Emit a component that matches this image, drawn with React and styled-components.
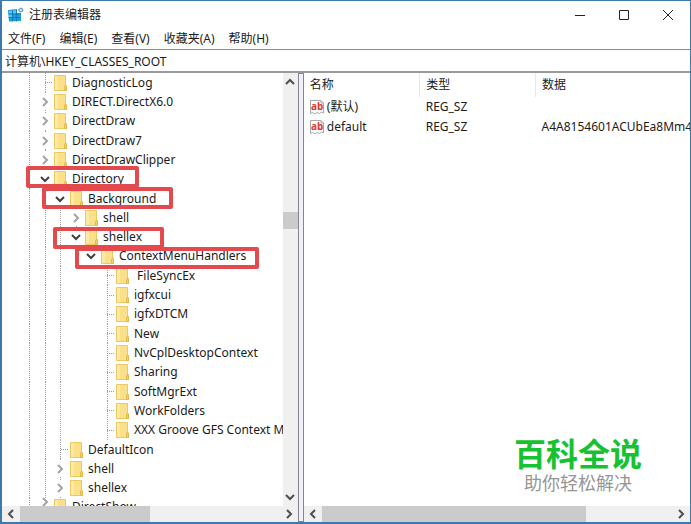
import React from 'react';
import styled, { createGlobalStyle } from 'styled-components';

const GlobalStyle = createGlobalStyle`
  * {
    box-sizing: border-box;
  }

  body {
    margin: 0;
    background: #fff;
    color: #1b1b1b;
    font: 12px/18px 'Noto Sans', 'Noto Sans CJK SC', sans-serif;
  }

  button, input {
    margin: 0;
    padding: 0;
    border: 0;
    background: none;
    color: inherit;
    font: inherit;
  }
`;

const Window = styled.div`
  display: flex;
  flex-direction: column;
  height: 100vh;
  border: 2px solid #3d79ad;
  border-width: 1px 1px 2px 2px;
  overflow: hidden;
`;

const TitleBar = styled.header`
  display: flex;
  flex: none;
  align-items: center;
  height: 28px;
  padding-left: 6px;
`;

const Title = styled.h1`
  flex: 1;
  margin: 0 0 0 5px;
  font-size: 12px;
  font-weight: 400;
`;

const WindowButton = styled.button`
  display: flex;
  align-items: center;
  justify-content: center;
  width: 44px;
  height: 28px;
`;

const MenuBar = styled.nav`
  display: flex;
  flex: none;
  gap: 14px;
  align-items: center;
  height: 20px;
  padding-left: 6px;
`;

const AddressBar = styled.input`
  flex: none;
  width: 100%;
  height: 22px;
  padding: 0 3px;
  border-top: 1px solid #8c8c8c;
  outline: 0;
`;

const Panes = styled.main`
  display: flex;
  flex: 1;
  min-height: 0;
  border-top: 2px solid #9a9a9a;
`;

const Pane = styled.section`
  position: relative;
  display: flex;
  flex: ${props => props.$flex};
  flex-direction: column;
  min-width: 0;
`;

const Splitter = styled.div`
  width: 6px;
  border: 1px solid #85858f;
  background: #f0f0f8;
`;

const PaneBody = styled.div`
  display: flex;
  flex: 1;
  min-height: 0;
`;

const Tree = styled.ul`
  display: flex;
  flex: 1;
  flex-direction: column;
  min-width: 0;
  margin: 0;
  padding: 0 0 0 19px;
  overflow: hidden;
  list-style: none;
`;

const TreeRow = styled.li`
  position: relative;
  display: flex;
  flex: ${props => (props.$cut ? '0 0 8px' : '1 1 0')};
  align-items: ${props => (props.$cut ? 'flex-start' : 'center')};
  min-height: 0;
  overflow: ${props => (props.$cut ? 'hidden' : 'visible')};
  white-space: nowrap;
`;

const dots = angle =>
  `repeating-linear-gradient(${angle}, #9c9c9c 0 1px, transparent 1px 2px)`;

const Guide = styled.span`
  display: flex;
  flex: none;
  align-items: center;
  align-self: stretch;
  justify-content: center;
  width: 16px;
  background: ${props => (props.$line ? dots('180deg') : 'none')} 8px 0 / 1px 100% no-repeat;

  &:nth-child(even) {
    width: 15px;
  }
`;

const Branch = styled.span`
  width: 7px;
  height: 1px;
  margin-left: 8px;
  background: ${dots('90deg')};
`;

const Expander = styled.button`
  display: flex;
  align-items: center;
  justify-content: center;
  width: 13px;
  height: 15px;
  background: #fff;
`;

const TreeLabel = styled.span`
  display: flex;
  align-items: center;
  gap: 5px;
  height: 19px;
  padding-left: 2px;
  white-space: pre;
`;

const Highlight = styled.span`
  position: absolute;
  top: ${props => props.$top}px;
  left: ${props => props.$left}px;
  z-index: 1;
  width: ${props => props.$width}px;
  height: 22px;
  border: 4px solid #e3494d;
  border-radius: 2px;
  pointer-events: none;
`;

const ScrollBar = styled.div`
  display: flex;
  flex: none;
  flex-direction: ${props => (props.$vertical ? 'column' : 'row')};
  width: ${props => (props.$vertical ? '15px' : 'auto')};
  height: ${props => (props.$vertical ? 'auto' : '16px')};
  background: #f0f0f0;
`;

const ScrollButton = styled.button`
  display: flex;
  flex: 0 0 18px;
  align-items: center;
  justify-content: center;
`;

const Track = styled.div`
  display: flex;
  flex: 1;
  flex-direction: inherit;
`;

const TrackSpace = styled.div`
  flex: ${props => props.$size} 1 0;
`;

const Thumb = styled.div`
  flex: ${props => props.$size} 1 0;
  background: #cbcbcb;
`;

const ValueArea = styled.div`
  flex: 1;
  min-height: 0;
  overflow: hidden;
`;

const Values = styled.table`
  width: 100%;
  border-collapse: collapse;
  table-layout: fixed;
`;

const HeadCell = styled.th`
  width: ${props => props.$width || 'auto'};
  height: 24px;
  padding: 0 0 0 6px;
  border-right: 1px solid #e8e8e8;
  font-weight: 400;
  text-align: left;

  &:last-child {
    border-right: 0;
  }
`;

const Cell = styled.td`
  height: 20px;
  padding: 0 0 0 6px;
  overflow: hidden;
  white-space: nowrap;
`;

const ValueName = styled.span`
  display: flex;
  align-items: center;
  gap: 2px;
  margin-left: -1px;
`;

const Watermark = styled.div`
  position: absolute;
  right: 48px;
  bottom: 28px;
  display: flex;
  flex-direction: column;
  align-items: center;
  font-family: 'Noto Sans CJK SC', sans-serif;
`;

const WatermarkName = styled.strong`
  color: #17c232;
  font-size: 32px;
  font-weight: 700;
  line-height: 36px;
`;

const WatermarkSlogan = styled.span`
  color: #969696;
  font-size: 18px;
  line-height: 24px;
`;

const chevrons = {
  up: 'M1 7 L5 3 L9 7',
  down: 'M1 3 L5 7 L9 3',
  left: 'M7 1 L3 5 L7 9',
  right: 'M3 1 L7 5 L3 9',
};

const Chevron = ({ dir, color = '#4f4f4f', width = 2 }) => (
  <svg width="10" height="10" viewBox="0 0 10 10" aria-hidden="true">
    <path d={chevrons[dir]} fill="none" stroke={color} strokeWidth={width} />
  </svg>
);

const FolderIcon = () => (
  <svg width="13" height="16" viewBox="0 0 13 16" aria-hidden="true">
    <path d="M0.5 0.5H11.5V10L12.5 11V15.5H0.5Z" fill="#fbe08a" stroke="#ecc963" />
    <path d="M1 1H4V15H1Z" fill="#fde9a6" />
    <path d="M10.5 15.5V12L11.5 10L12.5 11.5V15.5Z" fill="#f6d164" stroke="#e3b84b" />
  </svg>
);

const RegistryIcon = () => (
  <svg width="16" height="16" viewBox="0 0 16 16" aria-hidden="true">
    <path d="M0 3L9 2V6H13V14L1 14.5Z" fill="#1b9fdc" />
    <path d="M1 4L4 3.6V6.5H1ZM5 3.5L8 3.2V6.5H5ZM1 7.5H4V10H1Z" fill="#5cc9f2" />
    <path d="M0.5 7H12.5M0.5 10.5H12.5M4.5 3V14.5M8.5 3V14.5" stroke="#0f78b6" strokeWidth="0.8" />
    <path d="M12.5 0.5L15 1.5L15.5 4L13.5 5.5L11 5L10 2.5Z" fill="#69a9c9" />
    <circle cx="12.8" cy="3" r="1.1" fill="#e5f5fc" />
  </svg>
);

const StringIcon = () => (
  <svg width="16" height="16" viewBox="0 0 16 16" aria-hidden="true">
    <path
      d="M1.5 1.5H12L14.5 4V14L12.5 13L10.5 14.5L8 13.5L6 15L3.5 13.5L1.5 14.5Z"
      fill="#fff"
      stroke="#a9a9a9"
    />
    <path d="M12 1.5V4H14.5" fill="none" stroke="#a9a9a9" />
    <text x="2" y="11" fill="#dc3d27" fontSize="10" fontWeight="700" fontFamily="Noto Sans">
      ab
    </text>
  </svg>
);

const Scroll = ({ vertical, before, size, after }) => (
  <ScrollBar $vertical={vertical}>
    <ScrollButton aria-label={vertical ? 'Scroll up' : 'Scroll left'}>
      <Chevron dir={vertical ? 'up' : 'left'} />
    </ScrollButton>
    <Track>
      <TrackSpace $size={before} />
      <Thumb $size={size} />
      <TrackSpace $size={after} />
    </Track>
    <ScrollButton aria-label={vertical ? 'Scroll down' : 'Scroll right'}>
      <Chevron dir={vertical ? 'down' : 'right'} />
    </ScrollButton>
  </ScrollBar>
);

// guides, one letter per level: l line, n nothing, t branch, c closed, o open
const nodes = [
  { name: 'DiagnosticLog', guides: 'lt' },
  { name: 'DIRECT.DirectX6.0', guides: 'lc' },
  { name: 'DirectDraw', guides: 'lc' },
  { name: 'DirectDraw7', guides: 'lc' },
  { name: 'DirectDrawClipper', guides: 'lc' },
  { name: 'Directory', guides: 'lo', mark: { top: -4, left: 24, width: 113 } },
  { name: 'Background', guides: 'llo', mark: { top: -2, left: 40, width: 131 } },
  { name: 'shell', guides: 'lllc' },
  { name: 'shellex', guides: 'lllo', mark: { top: -1, left: 51, width: 111 } },
  { name: 'ContextMenuHandlers', guides: 'lllno', mark: { top: 0, left: 73, width: 184 } },
  { name: ' FileSyncEx', guides: 'lllnnt' },
  { name: 'igfxcui', guides: 'lllnnt' },
  { name: 'igfxDTCM', guides: 'lllnnt' },
  { name: 'New', guides: 'lllnnt' },
  { name: 'NvCplDesktopContext', guides: 'lllnnt' },
  { name: 'Sharing', guides: 'lllnnt' },
  { name: 'SoftMgrExt', guides: 'lllnnt' },
  { name: 'WorkFolders', guides: 'lllnnt' },
  { name: 'XXX Groove GFS Context Menu', guides: 'lllnnt' },
  { name: 'DefaultIcon', guides: 'llt' },
  { name: 'shell', guides: 'llc' },
  { name: 'shellex', guides: 'llc' },
  { name: 'DirectShow', guides: 'lc', cut: true },
];

const menus = ['文件(F)', '编辑(E)', '查看(V)', '收藏夹(A)', '帮助(H)'];

const values = [
  { name: '(默认)', type: 'REG_SZ', data: '' },
  { name: 'default', type: 'REG_SZ', data: 'A4A8154601ACUbEa8Mm4' },
];

const TreeNode = ({ node }) => (
  <TreeRow role="treeitem" aria-level={node.guides.length} $cut={node.cut}>
    {node.guides.split('').map((kind, i) => (
      <Guide key={i} $line={kind === 'l' || kind === 't' || kind === 'c'}>
        {kind === 't' && <Branch />}
        {kind === 'c' && (
          <Expander aria-label="Expand">
            <Chevron dir="right" color="#a3a3a3" />
          </Expander>
        )}
        {kind === 'o' && (
          <Expander aria-label="Collapse">
            <Chevron dir="down" color="#404040" />
          </Expander>
        )}
      </Guide>
    ))}
    <TreeLabel>
      <FolderIcon />
      <span>{node.name}</span>
    </TreeLabel>
    {node.mark && (
      <Highlight
        $top={node.mark.top}
        $left={node.mark.left - 19}
        $width={node.mark.width}
      />
    )}
  </TreeRow>
);

const App = () => (
  <Window>
    <GlobalStyle />
    <TitleBar>
      <RegistryIcon />
      <Title>注册表编辑器</Title>
      <WindowButton aria-label="Minimize">
        <svg width="12" height="12" viewBox="0 0 12 12">
          <path d="M1 6.5H11" stroke="#222" />
        </svg>
      </WindowButton>
      <WindowButton aria-label="Maximize">
        <svg width="12" height="12" viewBox="0 0 12 12">
          <path d="M1.5 1.5H10.5V10.5H1.5Z" fill="none" stroke="#222" />
        </svg>
      </WindowButton>
      <WindowButton aria-label="Close">
        <svg width="12" height="12" viewBox="0 0 12 12">
          <path d="M1 1L11 11M11 1L1 11" stroke="#222" />
        </svg>
      </WindowButton>
    </TitleBar>
    <MenuBar>
      {menus.map(menu => (
        <button key={menu}>{menu}</button>
      ))}
    </MenuBar>
    <AddressBar aria-label="Address" defaultValue="计算机\HKEY_CLASSES_ROOT" />
    <Panes>
      <Pane $flex="0 0 43%">
        <PaneBody>
          <Tree role="tree">
            {nodes.map((node, i) => (
              <TreeNode key={i} node={node} />
            ))}
          </Tree>
          <Scroll vertical before={121} size={17} after={258} />
        </PaneBody>
        <Scroll before={0} size={122} after={122} />
      </Pane>
      <Splitter />
      <Pane $flex="1 1 0">
        <ValueArea>
          <Values>
            <thead>
              <tr>
                <HeadCell $width="30%">名称</HeadCell>
                <HeadCell $width="30%">类型</HeadCell>
                <HeadCell>数据</HeadCell>
              </tr>
            </thead>
            <tbody>
              {values.map(value => (
                <tr key={value.name}>
                  <Cell>
                    <ValueName>
                      <StringIcon />
                      {value.name}
                    </ValueName>
                  </Cell>
                  <Cell>{value.type}</Cell>
                  <Cell>{value.data}</Cell>
                </tr>
              ))}
            </tbody>
          </Values>
        </ValueArea>
        <Scroll before={0} size={264} after={86} />
        <Watermark>
          <WatermarkName>百科全说</WatermarkName>
          <WatermarkSlogan>助你轻松解决</WatermarkSlogan>
        </Watermark>
      </Pane>
    </Panes>
  </Window>
);

export default App;
